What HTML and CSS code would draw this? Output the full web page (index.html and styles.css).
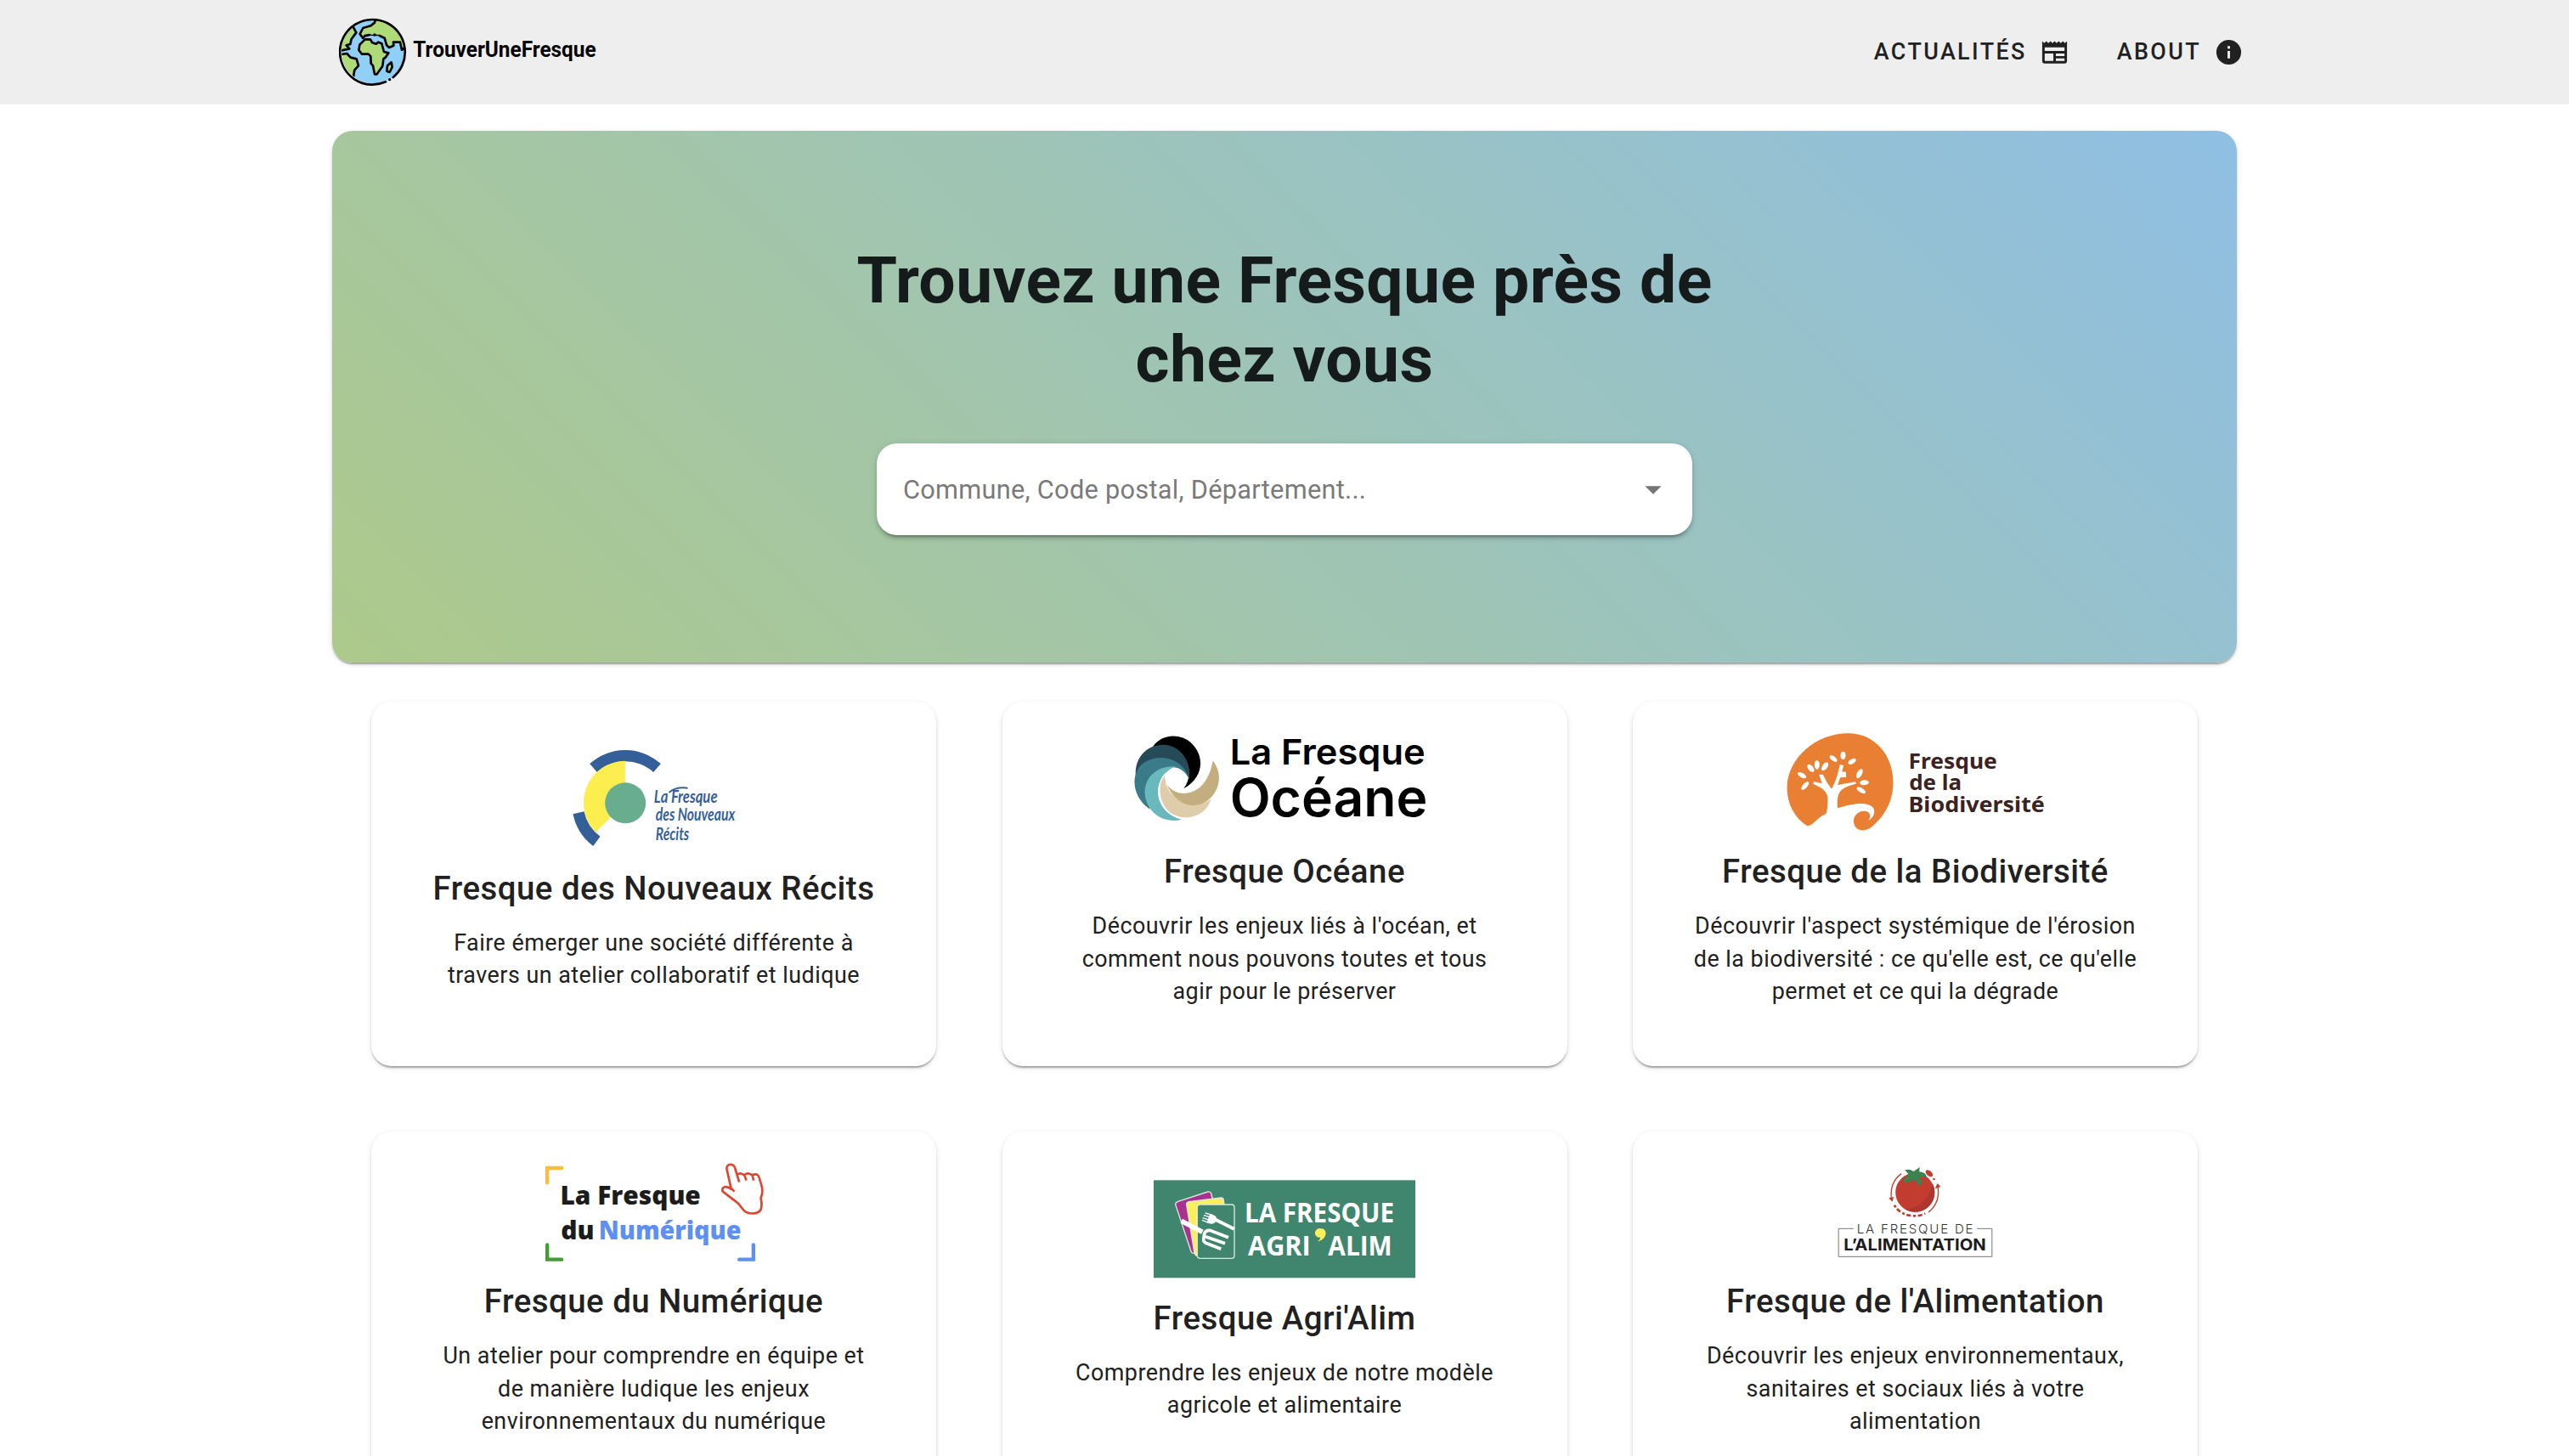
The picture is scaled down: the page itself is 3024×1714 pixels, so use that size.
FILE: index.html
```html
<!DOCTYPE html>
<html lang="fr">
<head>
<meta charset="utf-8">
<title>TrouverUneFresque</title>
<link rel="stylesheet" href="styles.css">
</head>
<body>
<header class="header">
  <a class="brand">
    <svg width="310" height="90" viewBox="54 50 930 270">
      <defs><clipPath id="globe"><circle cx="176" cy="184" r="113"/></clipPath></defs>
      <circle cx="176" cy="184" r="113" fill="#90cff6"/>
      <g clip-path="url(#globe)" fill="#afda78" stroke="#000" stroke-width="8" stroke-linejoin="round" stroke-linecap="round">
        <path d="M50 90L104 97L115 117L98 140L94 158L80 162L91 174L62 180L40 170Z"/>
        <path d="M50 196L82 191L95 205L116 210L123 234L109 249L104 280L60 280Z"/>
        <path d="M184 66L180 82L166 93L139 101L128 122L139 137L146 128L197 128L215 136L222 161L231 170L247 163L246 151L270 151L276 178L300 160L290 60Z"/>
        <path d="M160 128L198 129L182 138L148 138Z" fill="#90cff6" stroke="none"/>
        <path d="M146 141L165 141L171 152L185 157L193 151L205 156L213 185L229 189L219 204L211 210L208 235L188 264L180 264L174 234L167 226L166 201L158 193L135 193L124 179L127 160Z"/>
        <path d="M239 222L242 239L233 257L223 253L225 234Z"/>
      </g>
      <path d="M219 291A115 115 0 1 1 245 275" fill="none" stroke="#000" stroke-width="8" stroke-linecap="round"/>
      <path d="M162 125L146 128" stroke="#000" stroke-width="8" stroke-linecap="round"/>
      <circle cx="180" cy="125" r="5"/><circle cx="233" cy="283" r="5"/>
      <text class="t-roboto bold" x="316" y="203" font-size="75" textLength="646" lengthAdjust="spacingAndGlyphs">TrouverUneFresque</text>
    </svg>
  </a>
  <nav class="nav">
    <a class="nav-link">Actualités
      <svg class="nav-icon" viewBox="0 0 24 24"><path d="M20,11H4V8H20M20,15H13V13H20M20,19H13V17H20M11,19H4V13H11M20.33,4.67L18.67,3L17,4.67L15.33,3L13.67,4.67L12,3L10.33,4.67L8.67,3L7,4.67L5.33,3L3.67,4.67L2,3V19A2,2 0 0,0 4,21H20A2,2 0 0,0 22,19V3L20.33,4.67Z"/></svg></a>
    <a class="nav-link">About
      <svg class="nav-icon" viewBox="0 0 24 24"><path d="M13,9H11V7H13M13,17H11V11H13M12,2A10,10 0 0,0 2,12A10,10 0 0,0 12,22A10,10 0 0,0 22,12A10,10 0 0,0 12,2Z"/></svg></a>
  </nav>
</header>
<main class="page">
  <section class="hero">
    <h1 class="hero-title">Trouvez une Fresque près de<br>chez vous</h1>
    <div class="search">
      <span class="placeholder">Commune, Code postal, Département...</span>
      <svg class="caret" viewBox="0 0 24 24"><path d="M7,10L12,15L17,10H7Z"/></svg>
    </div>
  </section>
  <section class="cards">
    <article class="card">
      <svg width="200" height="116" viewBox="88.5 69 600 348">
        <path d="M161 117A188 188 0 0 1 412 117L386 147A148 148 0 0 0 187 147Z" fill="#355f99"/>
        <path d="M102 295A188 188 0 0 0 173 408L198 374A148 148 0 0 1 141 286Z" fill="#355f99"/>
        <path d="M286 107A148 148 0 0 0 182 359L286 256Z" fill="#fcee4f"/>
        <circle cx="287" cy="256" r="72" fill="#69ad8f"/>
        <g class="script" fill="#355f99" font-size="62">
          <text x="388" y="254" textLength="224" lengthAdjust="spacingAndGlyphs">La Fresque</text>
          <text x="394" y="319" textLength="280" lengthAdjust="spacingAndGlyphs">des Nouveaux</text>
          <text x="394" y="388" textLength="118" lengthAdjust="spacingAndGlyphs">Récits</text>
        </g>
        <path d="M441 219Q465 198 507 203" fill="none" stroke="#355f99" stroke-width="6"/>
      </svg>
      <h2 class="card-title">Fresque des Nouveaux Récits</h2>
      <p class="card-text">Faire émerger une société différente à<br>travers un atelier collaboratif et ludique</p>
    </article>
    <article class="card">
      <svg width="360" height="116" viewBox="66 41 1080 348">
        <path d="M138 95C165 45 235 38 277 76C328 125 318 200 250 237C275 205 275 160 250 125C225 95 190 85 138 95Z" fill="#000"/>
        <path d="M81 195C74 125 125 76 190 83C245 92 277 145 270 205C255 170 225 150 190 158L110 190Z" fill="#264a58"/>
        <path d="M130 310C65 265 60 180 110 145C160 112 245 125 269 200C250 168 220 155 195 165C150 185 118 230 130 310Z" fill="#397b88"/>
        <path d="M243 346C170 365 108 310 113 240C120 190 160 155 222 159C180 175 155 215 160 260C165 300 195 335 243 346Z" fill="#69b8bd"/>
        <path d="M184 186C153 220 158 290 203 325C260 360 335 335 350 268C300 310 220 290 190 225Z" fill="#dfccaa" stroke="#fff" stroke-width="4"/>
        <path d="M188 218C220 275 330 275 353 138C382 175 385 230 345 270C300 315 225 305 188 218Z" fill="#c4ae7f"/>
        <text class="t-inter semi" x="413" y="152" font-size="124" textLength="690" lengthAdjust="spacingAndGlyphs">La Fresque</text>
        <text class="t-inter semi" x="413" y="336" font-size="184" textLength="698" lengthAdjust="spacingAndGlyphs">Océane</text>
      </svg>
      <h2 class="card-title">Fresque Océane</h2>
      <p class="card-text">Découvrir les enjeux liés à l'océan, et<br>comment nous pouvons toutes et tous<br>agir pour le préserver</p>
    </article>
    <article class="card">
      <svg width="310" height="116" viewBox="58.5 41 930 348">
        <path d="M141 369C95 340 69 290 69 232C72 130 170 42 285 42C380 42 444 120 444 215C444 280 415 335 365 375C345 390 305 390 304 350C305 325 335 308 356 320C365 330 364 340 356 349C375 340 382 320 374 305C350 280 300 290 248 306C245 280 247 255 262 241C280 228 295 225 313 220L311 213L248 224L257 198L278 197L277 178L263 177L269 155L256 152C250 180 240 215 227 238C215 225 205 205 196 187L182 188L193 219L163 212L162 221C185 232 206 240 212 265C214 290 212 310 207 326C180 335 160 370 141 369Z" fill="#e97f33"/>
        <g fill="#fff">
          <ellipse cx="267" cy="120" rx="9" ry="14"/><ellipse cx="233" cy="131" rx="8" ry="16" transform="rotate(-52 233 131)"/>
          <ellipse cx="299" cy="141" rx="8" ry="15" transform="rotate(60 299 141)"/><ellipse cx="175" cy="153" rx="9" ry="16"/>
          <ellipse cx="203" cy="159" rx="9" ry="17" transform="rotate(35 203 159)"/><ellipse cx="153" cy="165" rx="9" ry="16" transform="rotate(-40 153 165)"/>
          <ellipse cx="122" cy="190" rx="8" ry="17" transform="rotate(-60 122 190)"/><ellipse cx="133" cy="227" rx="8" ry="18" transform="rotate(42 133 227)"/>
          <ellipse cx="325" cy="184" rx="9" ry="18" transform="rotate(28 325 184)"/><ellipse cx="342" cy="216" rx="9" ry="16" transform="rotate(85 342 216)"/>
          <ellipse cx="331" cy="243" rx="8" ry="18" transform="rotate(-58 331 243)"/>
        </g>
        <g class="t-noto bold" fill="#3c2221" font-size="74">
          <text x="498" y="166" textLength="313" lengthAdjust="spacingAndGlyphs">Fresque</text>
          <text x="500" y="242" textLength="186" lengthAdjust="spacingAndGlyphs">de la</text>
          <text x="498" y="320" textLength="481" lengthAdjust="spacingAndGlyphs">Biodiversité</text>
        </g>
      </svg>
      <h2 class="card-title">Fresque de la Biodiversité</h2>
      <p class="card-text">Découvrir l'aspect systémique de l'érosion<br>de la biodiversité : ce qu'elle est, ce qu'elle<br>permet et ce qui la dégrade</p>
    </article>
    <article class="card">
      <svg width="270" height="116" viewBox="43.5 60 810 348">
        <g fill="none" stroke-width="13" stroke-linecap="round">
          <path d="M71 130V78H122" stroke="#f7be41"/>
          <path d="M71 349V401H122" stroke="#479a36"/>
          <path d="M799 349V401H749" stroke="#5d90f2"/>
        </g>
        <path d="M749 128L734 78C730 60 701 62 705 82L721 153C703 137 687 145 690 160C707 173 722 185 738 197C755 208 758 225 772 233C787 242 817 240 825 225C830 210 828 196 825 184C836 160 829 142 823 124C818 104 815 96 795 102L800 122M795 104C785 94 776 96 767 102L774 122M767 104C757 94 748 96 741 101M721 150L732 161" fill="none" stroke="#dc4732" stroke-width="8" stroke-linejoin="round"/>
        <g class="t-open heavy" font-size="91">
          <text x="117" y="207" fill="#1c1c1c" textLength="496" lengthAdjust="spacingAndGlyphs">La Fresque</text>
          <text x="119" y="331" fill="#1c1c1c" textLength="118" lengthAdjust="spacingAndGlyphs">du</text>
          <text x="253" y="331" fill="#5d90f2" textLength="503" lengthAdjust="spacingAndGlyphs">Numérique</text>
        </g>
      </svg>
      <h2 class="card-title">Fresque du Numérique</h2>
      <p class="card-text">Un atelier pour comprendre en équipe et<br>de manière ludique les enjeux<br>environnementaux du numérique</p>
    </article>
    <article class="card">
      <svg width="308" height="116" viewBox="54 59 924 348">
        <rect x="54" y="60" width="924" height="345" fill="#40866f"/>
        <g stroke="#dce9e0" stroke-width="4">
          <path d="M140 135L245 101Q254 99 257 107L308 300L194 318Q188 318 186 312L131 146Q131 138 140 135Z" fill="#a9328f"/>
          <path d="M178 136L292 122Q300 122 301 130L320 325L208 328Q200 326 198 318L170 146Q170 138 178 136Z" fill="#fbf05b"/>
          <rect x="208" y="146" width="131" height="190" rx="10" fill="#40866f"/>
        </g>
        <g fill="none" stroke="#fff" stroke-linecap="butt">
          <path d="M152 204L226 243" stroke-width="17"/>
          <path d="M318 262L252 237Q238 236 233 248L230 270Q230 278 238 282L292 303M237 259L306 283" stroke-width="11"/>
          <path d="M338 232L268 197" stroke-width="12"/>
          <path d="M236 176L262 183M231 184L258 192M227 193L252 201M225 201L248 210" stroke-width="4"/>
        </g>
        <path d="M252 180Q282 184 275 203Q266 221 242 210Z" fill="#fff"/>
        <g class="t-open bold" fill="#fff" font-size="96">
          <text x="375" y="208" textLength="528" lengthAdjust="spacingAndGlyphs">LA FRESQUE</text>
          <text x="387" y="325" textLength="221" lengthAdjust="spacingAndGlyphs">AGRI</text>
          <text x="670" y="325" textLength="226" lengthAdjust="spacingAndGlyphs">ALIM</text>
        </g>
        <path d="M644 231A16 16 0 1 0 643 262Q642 270 633 277Q661 268 662 247Q660 231 644 231Z" fill="#fbf05b"/>
      </svg>
      <h2 class="card-title">Fresque Agri'Alim</h2>
      <p class="card-text">Comprendre les enjeux de notre modèle<br>agricole et alimentaire</p>
    </article>
    <article class="card">
      <svg width="200" height="116" viewBox="43.5 30 600 348">
        <circle cx="341" cy="134" r="69" fill="#c23d30"/>
        <path d="M305 193Q375 193 404 105A69 69 0 0 1 305 193Z" fill="#ae372d"/>
        <path d="M305 55Q322 49 336 60L358 45L356 61Q376 62 382 77Q368 84 356 80Q369 96 361 112Q346 104 341 88Q325 100 300 97Q304 79 320 72Z" fill="#3c8150"/>
        <g fill="none" stroke="#c23d30">
          <path d="M293 68Q250 98 258 161M389 204Q434 166 420 106" stroke-width="4"/>
          <path d="M268 179Q291 218 345 217Q365 216 377 208" stroke-width="8" stroke-dasharray="9 7 16 8"/>
        </g>
        <path d="M248 154L266 150L261 167ZM412 121L420 102L432 114Z" fill="#c23d30"/>
        <ellipse cx="391" cy="67" rx="15" ry="9" transform="rotate(42 391 67)" fill="#c23d30"/><circle cx="408" cy="87" r="4" fill="#c23d30"/>
        <path d="M124 262H71V361H613V262H560" fill="none" stroke="#777" stroke-width="3"/>
        <text class="t-inter light" x="136" y="279" font-size="45" fill="#333" textLength="410">LA FRESQUE DE</text>
        <text class="t-inter bold" x="89" y="339" font-size="56" fill="#1c1c1c" textLength="503" lengthAdjust="spacingAndGlyphs">L’ALIMENTATION</text>
      </svg>
      <h2 class="card-title">Fresque de l'Alimentation</h2>
      <p class="card-text">Découvrir les enjeux environnementaux,<br>sanitaires et sociaux liés à votre<br>alimentation</p>
    </article>
  </section>
</main>
</body>
</html>
```
FILE: styles.css
```css
html { font-size: 30.74px; }
* { box-sizing: border-box; }
body {
  margin: 0;
  height: 1714px;
  overflow: hidden;
  background: #fff;
  color: #212121;
  font-family: Roboto, sans-serif;
}
.header {
  display: flex;
  align-items: center;
  justify-content: space-between;
  height: 123px;
  padding: 0 383px 0 399px;
  background: #eee;
}
.brand { display: flex; margin-top: -1px; }
.nav { display: flex; gap: 56px; margin-top: -1px; }
.nav-link {
  display: flex;
  align-items: center;
  gap: 15px;
  font-size: 0.875rem;
  font-weight: 500;
  letter-spacing: 0.0893em;
  text-transform: uppercase;
}
.nav-icon { width: 35px; height: 35px; fill: currentColor; }
.page { width: 2242px; margin: 31px auto 0; }
.hero {
  display: flex;
  flex-direction: column;
  align-items: center;
  height: 626px;
  padding-top: 130px;
  border-radius: 24px;
  background: linear-gradient(45deg, #adc98a, #8fbfe4);
  box-shadow: 0 4px 2px -2px rgba(0,0,0,.2), 0 2px 2px rgba(0,0,0,.14), 0 2px 6px rgba(0,0,0,.12);
}
.hero-title {
  margin: 0;
  color: #151a1a;
  font-size: 2.5rem;
  font-weight: 700;
  line-height: 92.5px;
  letter-spacing: 0.0057em;
  text-align: center;
}
.search {
  display: flex;
  align-items: center;
  justify-content: space-between;
  width: 960px;
  height: 108px;
  margin-top: 53px;
  padding: 0 23px 0 31px;
  border-radius: 24px;
  background: #fff;
  box-shadow: 0 6px 2px -4px rgba(0,0,0,.2), 0 4px 4px rgba(0,0,0,.14), 0 2px 10px rgba(0,0,0,.12);
}
.placeholder { color: #7a7a7a; font-size: 1rem; letter-spacing: 0.009em; }
.caret { width: 46px; height: 46px; fill: #757575; }
.cards {
  display: grid;
  grid-template-columns: repeat(3, 665px);
  gap: 77px 77.5px;
  padding: 46px;
}
.card {
  display: flex;
  flex-direction: column;
  align-items: center;
  justify-content: center;
  height: 429px;
  padding: 37px 0 68px;
  border-radius: 24px;
  background: #fff;
  text-align: center;
  box-shadow: 0 4px 2px -2px rgba(0,0,0,.2), 0 2px 2px rgba(0,0,0,.14), 0 2px 6px rgba(0,0,0,.12);
}
.card-title {
  margin: 16px 0 14px;
  font-size: 1.25rem;
  font-weight: 500;
  line-height: 62px;
  letter-spacing: 0.0125em;
}
.card-text {
  margin: 0;
  font-size: 0.875rem;
  line-height: 38.5px;
  letter-spacing: 0.0179em;
}
.script { font-family: Lato, sans-serif; font-style: italic; font-weight: 700; }
.t-roboto { font-family: Roboto, sans-serif; }
.t-inter { font-family: Inter, sans-serif; }
.t-noto { font-family: "Noto Sans", sans-serif; }
.t-open { font-family: "Open Sans", sans-serif; }
.light { font-weight: 300; }
.semi { font-weight: 600; }
.bold { font-weight: 700; }
.heavy { font-weight: 800; }
```
